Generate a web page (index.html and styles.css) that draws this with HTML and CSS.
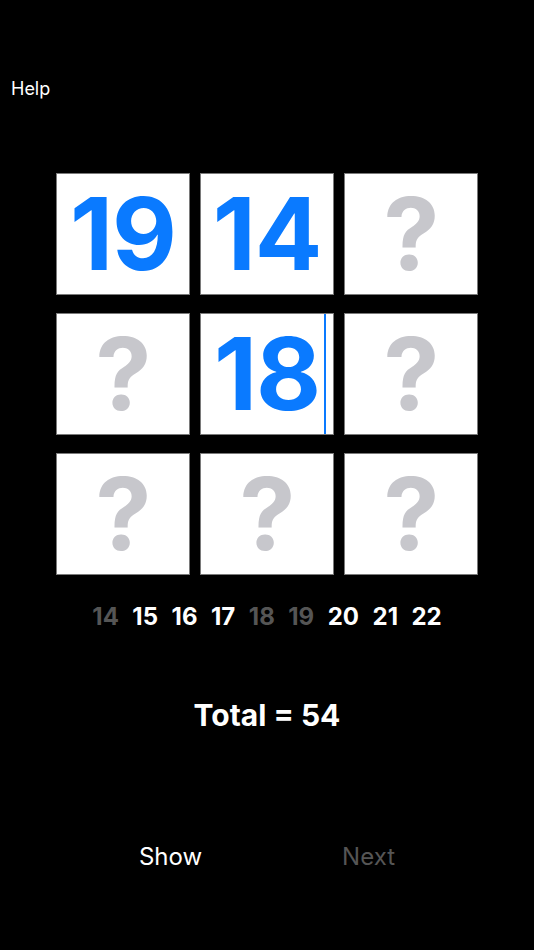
FILE: index.html
```html
<!DOCTYPE html>
<html>
<head>
<meta charset="utf-8">
<link rel="stylesheet" href="styles.css">
</head>
<body>
<div class="screen">
  <div class="help">Help</div>
  <div class="grid">
    <div class="cell filled">19</div>
    <div class="cell filled">14</div>
    <div class="cell empty">?</div>
    <div class="cell empty">?</div>
    <div class="cell filled active">18<span class="cursor"></span></div>
    <div class="cell empty">?</div>
    <div class="cell empty">?</div>
    <div class="cell empty">?</div>
    <div class="cell empty">?</div>
  </div>
  <div class="numbers">
    <span class="num used">14</span>
    <span class="num">15</span>
    <span class="num">16</span>
    <span class="num">17</span>
    <span class="num used">18</span>
    <span class="num used">19</span>
    <span class="num">20</span>
    <span class="num">21</span>
    <span class="num">22</span>
  </div>
  <div class="total">Total = 54</div>
  <div class="buttons">
    <span class="btn">Show</span>
    <span class="btn disabled">Next</span>
  </div>
</div>
</body>
</html>
```
FILE: styles.css
```css
html, body {
  margin: 0;
  padding: 0;
  background: #000;
}
body {
  width: 534px;
  height: 950px;
  overflow: hidden;
  font-family: Inter, "Liberation Sans", sans-serif;
  color: #fff;
}
.screen {
  display: flex;
  flex-direction: column;
}
.help {
  margin-top: 78px;
  margin-left: 11px;
  font-size: 18px;
  line-height: 22px;
}
.grid {
  margin-top: 73px;
  margin-left: 56px;
  display: grid;
  grid-template-columns: repeat(3, 134px);
  grid-auto-rows: 122px;
  column-gap: 10px;
  row-gap: 18px;
}
.cell {
  position: relative;
  box-sizing: border-box;
  background: #fff;
  border: 1px solid #7a7a7a;
  display: flex;
  align-items: center;
  justify-content: center;
  font-size: 100px;
  font-weight: 700;
  letter-spacing: -1px;
  line-height: 1;
}
.filled { color: #0a7aff; }
.empty { color: #c7c7cc; }
.cursor {
  position: absolute;
  left: 123px;
  top: 0;
  width: 2px;
  height: 120px;
  background: #0a7aff;
}
.numbers {
  margin-top: 27px;
  display: flex;
  justify-content: center;
  gap: 13.5px;
  font-size: 24px;
  font-weight: 700;
  line-height: 30px;
}
.num.used { color: #555; }
.total {
  margin-top: 65px;
  text-align: center;
  font-size: 30px;
  font-weight: 700;
  line-height: 36px;
}
.buttons {
  margin-top: 109px;
  display: flex;
  justify-content: center;
  gap: 140px;
  font-size: 24px;
  line-height: 30px;
}
.btn.disabled { color: #555; }
```
